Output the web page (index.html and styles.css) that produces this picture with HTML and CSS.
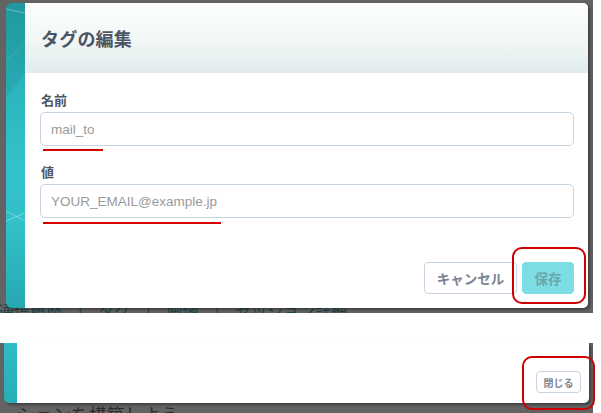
FILE: index.html
```html
<!DOCTYPE html>
<html lang="ja">
<head>
<meta charset="utf-8">
<title>タグの編集</title>
<link rel="stylesheet" href="styles.css">
</head>
<body>
<div class="page">
  <section class="shot shot-top">
    <div class="under-text">通信履歴　|　タグ　|　画像　|　セッション詳細</div>
    <div class="modal">
      <div class="strip">
        <svg width="19" height="305" viewBox="0 0 19 305" preserveAspectRatio="none">
          <polygon points="0,0 19,0 19,70 0,95" fill="#000" opacity="0.06"/>
          <line x1="0" y1="6" x2="19" y2="10" stroke="#ffffff" stroke-opacity="0.35" stroke-width="1"/>
          <line x1="0" y1="58" x2="19" y2="40" stroke="#ffffff" stroke-opacity="0.12" stroke-width="1"/>
          <line x1="0" y1="208" x2="19" y2="218" stroke="#ffffff" stroke-opacity="0.35" stroke-width="1"/>
          <line x1="0" y1="218" x2="19" y2="210" stroke="#ffffff" stroke-opacity="0.35" stroke-width="1"/>
        </svg>
      </div>
      <div class="panel">
        <header class="modal-head">
          <h1 class="modal-title">タグの編集</h1>
        </header>
        <div class="modal-body">
          <div class="field">
            <label class="field-label">名前</label>
            <div class="input-wrap">
              <div class="input">mail_to</div>
              <span class="mark mark-name"></span>
            </div>
          </div>
          <div class="field field-second">
            <label class="field-label">値</label>
            <div class="input-wrap">
              <div class="input">YOUR_EMAIL@example.jp</div>
              <span class="mark mark-value"></span>
            </div>
          </div>
        </div>
        <footer class="modal-foot">
          <button class="btn btn-cancel">キャンセル</button>
          <button class="btn btn-save">保存</button>
          <span class="ring ring-save"></span>
        </footer>
      </div>
    </div>
  </section>

  <div class="gap"></div>

  <section class="shot shot-bottom">
    <div class="modal2">
      <div class="strip2"></div>
      <div class="panel2">
        <button class="btn-close">閉じる</button>
      </div>
    </div>
    <div class="under-text2">ーションを構築しよう</div>
    <span class="ring ring-close"></span>
  </section>
</div>
</body>
</html>
```

FILE: styles.css
```css
* { box-sizing: border-box; }
html, body {
  margin: 0;
  padding: 0;
  background: #ffffff;
}
body {
  font-family: "Noto Sans CJK JP", "Liberation Sans", sans-serif;
  width: 601px;
  height: 413px;
  overflow: hidden;
}
.page {
  display: flex;
  flex-direction: column;
  width: 601px;
}

/* top screenshot */
.shot {
  position: relative;
  width: 593px;
  background: #636363;
}
.shot-top {
  height: 313px;
  padding: 3px 0 0 6px;
  overflow: hidden;
}
.under-text {
  position: absolute;
  left: -2px;
  top: 300px;
  font-size: 16px;
  line-height: 20px;
  color: #1e4346;
  white-space: nowrap;
  z-index: 0;
}
.modal {
  position: relative;
  z-index: 1;
  display: flex;
  width: 582px;
  height: 305px;
  border-radius: 6px 5px 5px 6px;
  overflow: hidden;
  box-shadow: 2px 2px 3px rgba(0, 0, 0, 0.35);
}
.strip {
  width: 19px;
  flex: none;
  background: linear-gradient(180deg, #22a2a9 0%, #2bb3bb 25%, #33c3cc 55%, #31bfc8 75%, #27a9b1 100%);
}
.strip svg { display: block; }
.panel {
  flex: 1;
  background: #ffffff;
  display: flex;
  flex-direction: column;
}
.modal-head {
  height: 70px;
  padding: 0 16px;
  display: flex;
  align-items: center;
  background: linear-gradient(180deg, #fdfefe 0%, #f2f7f7 50%, #e2ecec 100%);
}
.modal-title {
  margin: 0;
  padding-bottom: 1px;
  font-size: 18px;
  font-weight: 700;
  color: #4b5563;
  letter-spacing: 0.2px;
}
.modal-body {
  padding: 18px 14px 0 15px;
}
.field {
  display: flex;
  flex-direction: column;
}
.field-second { margin-top: 17px; }
.field-label {
  font-size: 13px;
  line-height: 17px;
  font-weight: 700;
  color: #4b5563;
  padding-left: 1px;
  margin-bottom: 4px;
}
.input-wrap { position: relative; }
.input {
  height: 34px;
  border: 1px solid #c6d3e1;
  border-radius: 5px;
  padding: 0 10px;
  display: flex;
  align-items: center;
  font-family: "Liberation Sans", "Noto Sans CJK JP", sans-serif;
  font-size: 13.5px;
  color: #9a9a9a;
}
.mark {
  position: absolute;
  height: 2px;
  background: #d40000;
  top: 37px;
  left: 3px;
}
.mark-name { width: 60px; }
.mark-value { width: 178px; top: 38px; }

.modal-foot {
  position: relative;
  margin-top: auto;
  padding: 0 14px 14px 0;
  display: flex;
  justify-content: flex-end;
  gap: 5px;
}
.btn {
  height: 32px;
  border-radius: 4px;
  font-family: "Noto Sans CJK JP", sans-serif;
  font-size: 13.5px;
  font-weight: 700;
  padding: 0;
  cursor: pointer;
}
.btn-cancel {
  width: 93px;
  background: #ffffff;
  border: 1px solid #c6d3e1;
  color: #7a8593;
}
.btn-save {
  width: 52px;
  background: #7cdee4;
  border: 1px solid #7cdee4;
  color: #6aa6ad;
}
.ring {
  position: absolute;
  border: 2px solid #cc0000;
  border-radius: 10px;
  z-index: 3;
}
.ring-save {
  right: 2px;
  bottom: 4px;
  width: 74px;
  height: 57px;
}

.gap { height: 30px; }

/* bottom screenshot */
.shot-bottom {
  height: 70px;
  padding-left: 4px;
  overflow: visible;
}
.modal2 {
  position: relative;
  z-index: 1;
  display: flex;
  width: 585px;
  height: 60px;
  border-radius: 0 0 5px 5px;
  overflow: hidden;
  box-shadow: 2px 2px 3px rgba(0, 0, 0, 0.35);
}
.strip2 {
  width: 13px;
  flex: none;
  background: linear-gradient(180deg, #2fbcc4 0%, #29adb5 100%);
}
.panel2 {
  flex: 1;
  background: #ffffff;
  display: flex;
  justify-content: flex-end;
  align-items: flex-start;
  padding: 28px 8px 0 0;
}
.btn-close {
  width: 45px;
  height: 22px;
  background: #ffffff;
  border: 1px solid #c8d4e2;
  border-radius: 4px;
  font-family: "Noto Sans CJK JP", sans-serif;
  font-size: 10px;
  font-weight: 700;
  color: #7b8794;
  padding: 0;
}
.under-text2 {
  position: absolute;
  left: -1px;
  top: 59px;
  font-size: 18px;
  line-height: 24px;
  color: #2b2b2b;
  white-space: nowrap;
  z-index: 0;
}
.ring-close {
  left: 522px;
  top: 13px;
  width: 73px;
  height: 54px;
}
```
